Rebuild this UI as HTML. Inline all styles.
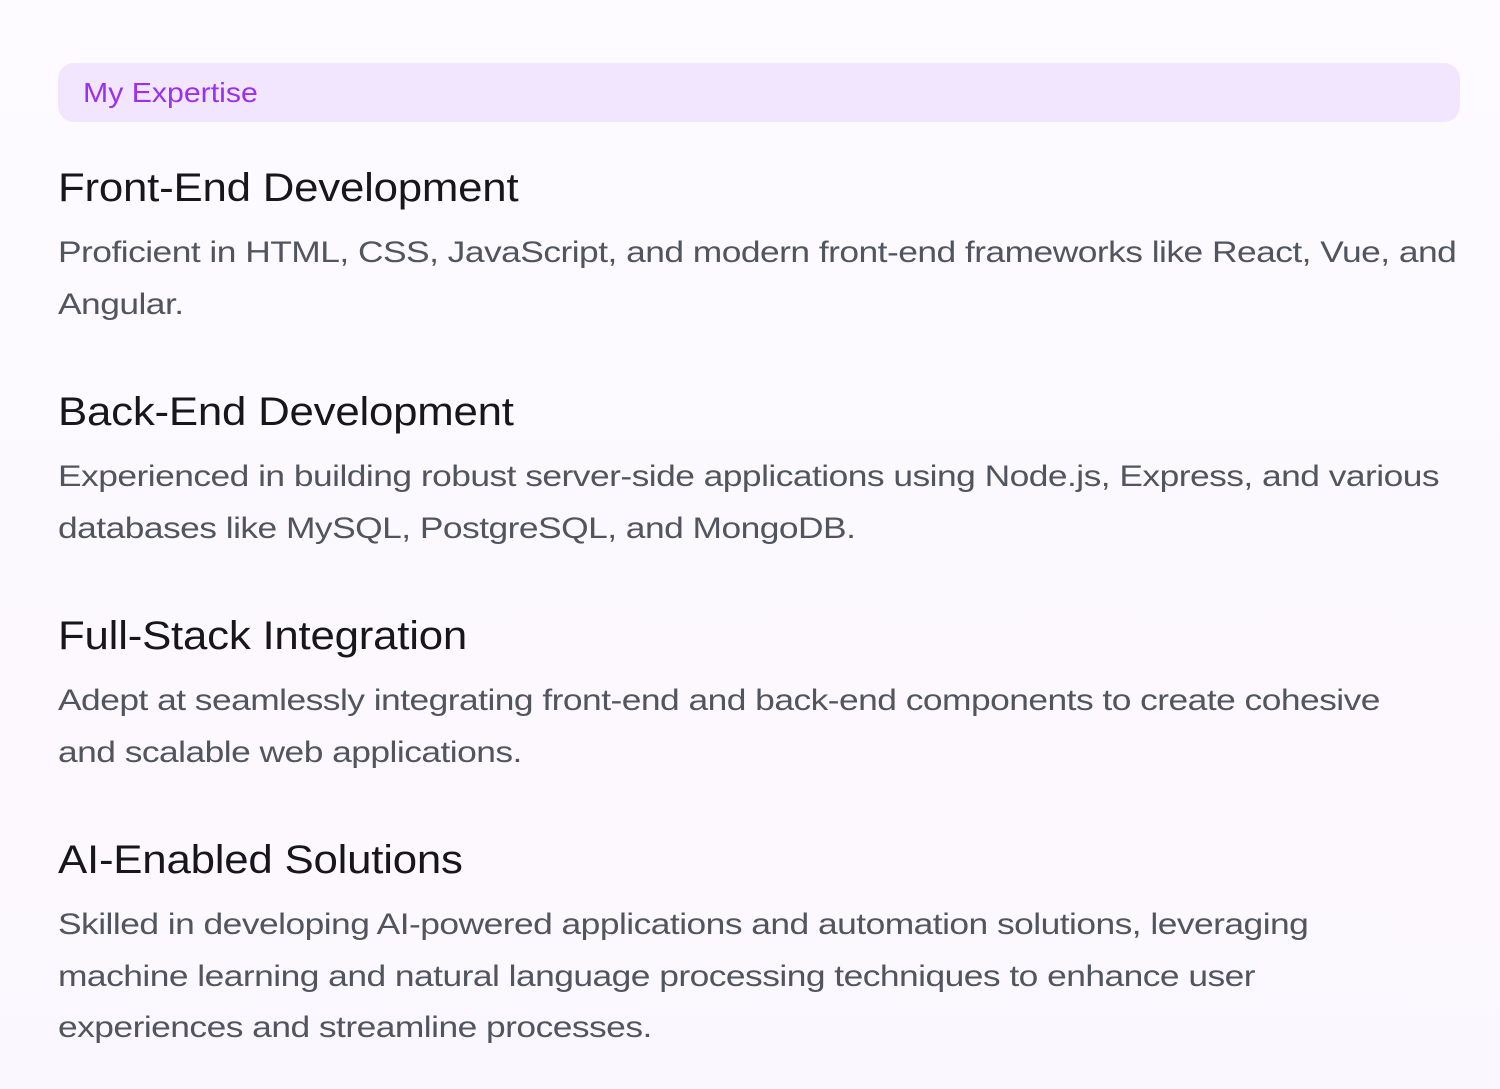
<!DOCTYPE html>
<html><head><meta charset="utf-8"><style>
html,body{margin:0;padding:0}
body{width:1500px;height:1089px;background:linear-gradient(180deg,#fdfbff 0%,#fbf7fe 100%);font-family:"Liberation Sans",sans-serif;position:relative;overflow:hidden}
.pill{position:absolute;left:58px;top:63px;width:1402px;height:59px;border-radius:16px;background:#f2e5fe}
.pill span{position:absolute;left:25px;top:14px;font-size:28px;color:#9b30f0;line-height:32px;transform:scaleX(1.08);transform-origin:left top;white-space:nowrap}
h2{position:absolute;left:58px;margin:0;font-weight:normal;font-size:40px;color:#16161c;line-height:46px;white-space:nowrap;letter-spacing:-0.2px;transform:scaleX(1.095);transform-origin:left top}
p{position:absolute;left:58px;margin:0;font-size:30px;color:#505560;line-height:51.5px;white-space:nowrap;letter-spacing:-0.45px;transform:scaleX(1.179);transform-origin:left top}
</style></head><body>
<div class="pill"><span>My Expertise</span></div>
<h2 style="top:165px">Front-End Development</h2>
<p style="top:227px">Proficient in HTML, CSS, JavaScript, and modern front-end frameworks like React, Vue, and<br>Angular.</p>
<h2 style="top:389px">Back-End Development</h2>
<p style="top:451px">Experienced in building robust server-side applications using Node.js, Express, and various<br>databases like MySQL, PostgreSQL, and MongoDB.</p>
<h2 style="top:613px">Full-Stack Integration</h2>
<p style="top:675px">Adept at seamlessly integrating front-end and back-end components to create cohesive<br>and scalable web applications.</p>
<h2 style="top:837px">AI-Enabled Solutions</h2>
<p style="top:899px">Skilled in developing AI-powered applications and automation solutions, leveraging<br>machine learning and natural language processing techniques to enhance user<br>experiences and streamline processes.</p>
</body></html>
